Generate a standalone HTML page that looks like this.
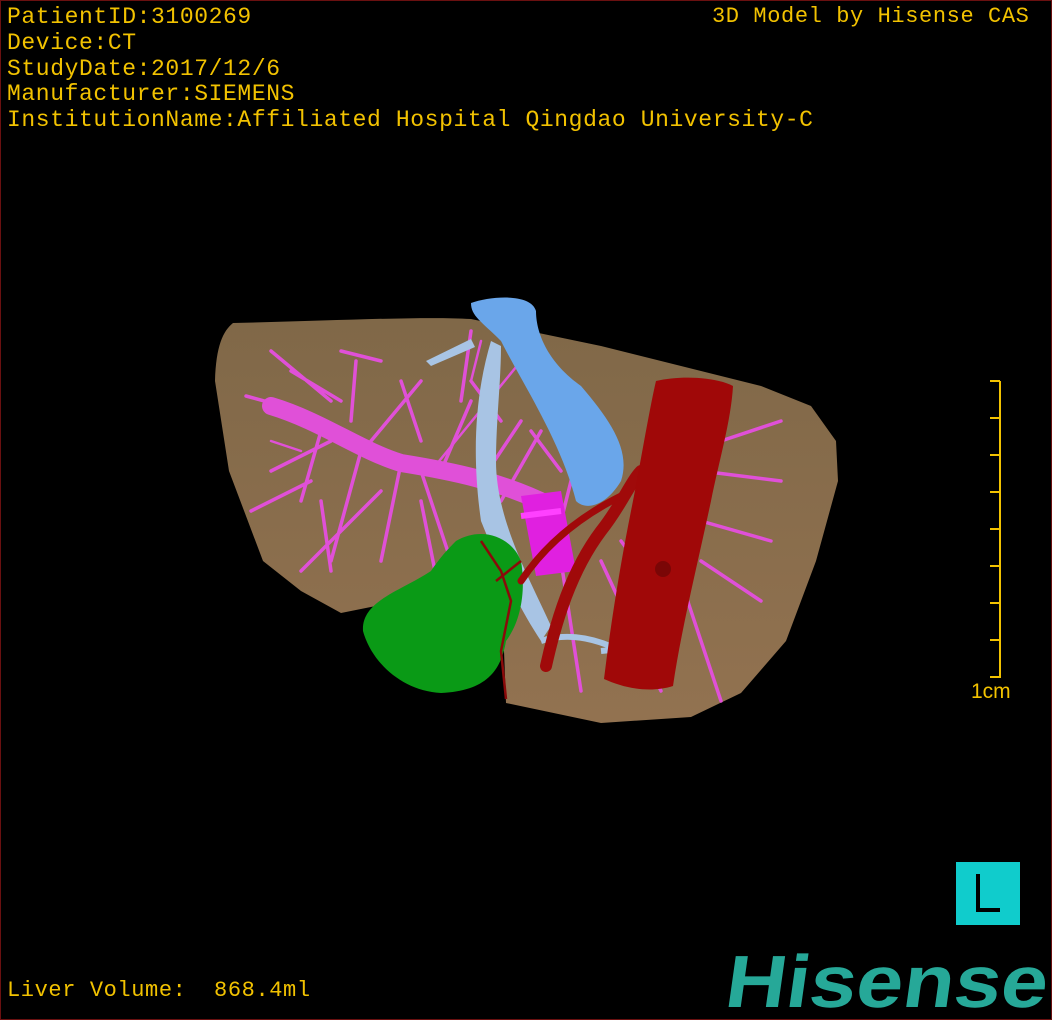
<!DOCTYPE html>
<html><head><meta charset="utf-8"><style>
html,body{margin:0;padding:0;background:#000;}
#v{position:relative;width:1050px;height:1018px;border:1px solid #6a1010;background:#000;overflow:hidden;font-family:"Liberation Mono",monospace;color:#f2c200;}
.t{position:absolute;left:6px;font-size:23px;white-space:pre;letter-spacing:0.6px;line-height:26px;}
</style></head><body><div id="v">
<div class="t" style="top:3px">PatientID:3100269</div>
<div class="t" style="top:29px">Device:CT</div>
<div class="t" style="top:55px">StudyDate:2017/12/6</div>
<div class="t" style="top:80px">Manufacturer:SIEMENS</div>
<div class="t" style="top:106px">InstitutionName:Affiliated Hospital Qingdao University-C</div>
<div class="t" style="top:3px;left:711px;font-size:22px">3D Model by Hisense CAS</div>
<div class="t" style="top:977px;font-size:22px">Liver Volume:  868.4ml</div>
<svg width="1050" height="1018" style="position:absolute;left:0;top:0">
<defs>
<linearGradient id="lg" x1="0" y1="0" x2="0" y2="1"><stop offset="0" stop-color="#806848"/><stop offset="1" stop-color="#927250"/></linearGradient>
</defs>
<path d="M232,322 C330,320 420,315 470,318 L600,345 L760,385 L810,405 L835,440 L837,480 L815,560 L785,640 L740,692 L690,716 L600,722 L505,702 L503,650 L460,620 L400,600 L340,612 L300,590 L262,560 L228,470 L214,380 C215,345 222,330 232,322 Z" fill="url(#lg)"/>
<g stroke="#e050d8" fill="none" stroke-linecap="round">
<path d="M270,405 C320,420 360,450 400,462 C450,470 500,480 550,505" stroke-width="18"/>
<path d="M320,430 L300,500 M330,440 L270,470 M360,450 L330,560 M400,462 L380,560 M420,470 L450,560 M350,420 L355,360 M330,400 L270,350 M300,410 L245,395 M370,440 L420,380 M440,470 L470,400 M480,480 L520,420 M460,400 L470,330 M500,500 L540,430 M560,520 L580,440 M600,560 L660,690 M560,560 L580,690 M620,540 L680,620 M700,560 L760,600 M700,470 L780,480 M720,440 L780,420 M700,520 L770,540 M680,580 L720,700 M310,480 L250,510 M380,490 L300,570 M420,500 L440,600 M320,500 L330,570 M400,380 L420,440 M290,370 L340,400 M340,350 L380,360 M530,430 L560,470 M500,420 L470,380" stroke-width="3.5"/>
<path d="M430,470 L520,360 M300,450 L270,440 M480,340 L470,380" stroke-width="2.5"/>
</g>
<path d="M520,495 L560,490 L575,570 L535,575 Z" fill="#e020e0"/>
<path d="M520,515 L560,510" stroke="#ff40ff" stroke-width="6"/>
<path d="M470,302 C490,295 530,292 535,310 C535,330 545,360 580,385 C610,420 630,450 620,480 C605,505 585,510 575,500 C560,440 520,380 500,340 C480,320 470,315 470,302 Z" fill="#6aa6ea"/>
<path d="M490,340 C475,390 470,450 480,520 C500,570 520,610 540,640 L550,625 C530,580 495,520 495,460 C495,420 500,380 500,345 Z" fill="#a8c4e4"/>
<path d="M425,360 L470,338 L474,346 L430,365 Z" fill="#a8c4e4"/>
<path d="M540,640 C570,630 600,640 620,650 M600,650 L650,645" stroke="#a8c4e4" stroke-width="6" fill="none"/>
<path d="M455,540 C480,525 510,535 520,560 C525,590 520,620 505,640 C500,670 485,690 440,692 C400,690 370,660 362,630 C360,600 400,590 430,570 C440,555 450,545 455,540 Z" fill="#0a9a16"/>
<path d="M480,540 L500,570 L510,600 L500,650 L505,698 M495,580 L520,560" stroke="#8a0a0a" stroke-width="2.5" fill="none"/>
<path d="M545,665 C555,620 570,570 600,530 C620,505 630,480 640,470" stroke="#a00a0a" stroke-width="12" fill="none" stroke-linecap="round"/>
<path d="M520,580 C540,550 570,520 620,495" stroke="#a00a0a" stroke-width="7" fill="none" stroke-linecap="round"/>
<path d="M655,380 C680,374 715,376 732,385 C730,420 718,460 710,500 C695,570 680,630 672,685 C650,692 625,688 603,678 C610,620 620,560 630,510 C640,460 648,410 655,380 Z" fill="#a00808"/>
<circle cx="662" cy="568" r="8" fill="#7a0606"/>
<line x1="999" y1="380" x2="999" y2="677" stroke="#f2c200" stroke-width="2"/>
<g stroke="#f2c200" stroke-width="2">
<line x1="989" y1="380" x2="999" y2="380"/><line x1="989" y1="417" x2="999" y2="417"/><line x1="989" y1="454" x2="999" y2="454"/><line x1="989" y1="491" x2="999" y2="491"/><line x1="989" y1="528" x2="999" y2="528"/><line x1="989" y1="565" x2="999" y2="565"/><line x1="989" y1="602" x2="999" y2="602"/><line x1="989" y1="639" x2="999" y2="639"/><line x1="989" y1="676" x2="999" y2="676"/>
</g>
<text x="970" y="697" fill="#f2c200" font-family="Liberation Sans,sans-serif" font-size="21">1cm</text>
<rect x="955" y="861" width="64" height="63" fill="#10cccc"/>
<path d="M977,873 L977,909 L999,909" stroke="#000" stroke-width="4" fill="none"/>
<g transform="translate(722,1006) skewX(-8)">
<text x="0" y="0" fill="#26a898" font-family="Liberation Sans,sans-serif" font-weight="bold" font-size="74" textLength="322" lengthAdjust="spacingAndGlyphs">Hisense</text>
</g>
</svg>
</div></body></html>
